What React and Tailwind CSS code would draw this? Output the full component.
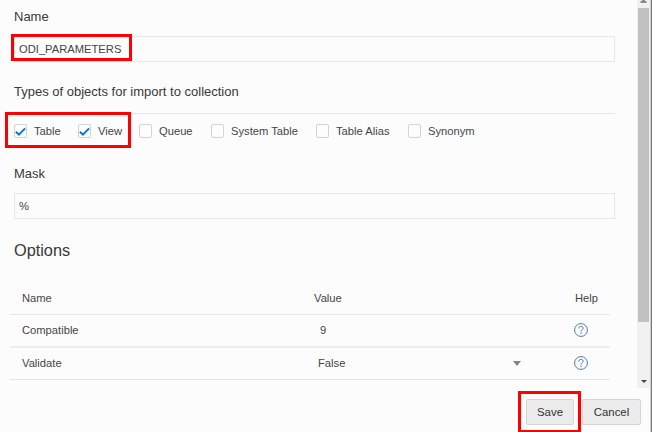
const types = [
  { label: 'Table', checked: true, cls: 'w-[64px]' },
  { label: 'View', checked: true, cls: 'w-[61px]' },
  { label: 'Queue', checked: false, cls: 'w-[72px]' },
  { label: 'System Table', checked: false, cls: 'w-[105px]' },
  { label: 'Table Alias', checked: false, cls: 'w-[92px]' },
  { label: 'Synonym', checked: false, cls: 'w-[80px]' },
];

function Checkbox({ label, checked, cls }) {
  return (
    <label className={`flex shrink-0 items-center gap-[7px] whitespace-nowrap ${cls}`}>
      <span className="flex h-[14px] w-[13px] shrink-0 items-center justify-center rounded-[2px] border border-[#d3d3d3] bg-[#fdfdfd]">
        {checked && (
          <svg className="shrink-0" width="11" height="11" viewBox="0 0 12 12" fill="none" stroke="#0b78c4" strokeWidth="2.2">
            <path d="M1 6.2 4.3 9.4 11 2.6" />
          </svg>
        )}
      </span>
      {label}
    </label>
  );
}

function HelpIcon() {
  return (
    <svg width="14" height="14" viewBox="0 0 14 14" fill="none" stroke="#4a7db0" strokeWidth="1">
      <circle cx="7" cy="7" r="6.4" />
      <path d="M4.8 5.5C4.8 4.1 5.7 3.4 7 3.4S9.2 4.2 9.2 5.3C9.2 6.7 7 6.8 7 8.7" />
      <path d="M7 9.8v1.2" strokeWidth="1.2" />
    </svg>
  );
}

export default function App() {
  return (
    <div className="relative flex h-[432px] w-[652px] flex-col overflow-hidden bg-[#fcfcfc] font-['Liberation_Sans',Arial,sans-serif] text-[11.2px] leading-[14px] text-[#454545]">
      <div className="flex h-[388px]">
        <main className="w-[637px] pt-[9px]">
          <div className="ml-[14px] w-[601px]">
            <h3 className="h-[27px] text-[13px] leading-[16px] text-[#383838]">Name</h3>
            <div className="flex h-[26px] items-center border border-[#e8e8e8] pl-1">ODI_PARAMETERS</div>
            <h3 className="h-[52px] border-b border-[#e6e6e6] pt-[22px] text-[13px] leading-[16px] text-[#383838]">Types of objects for import to collection</h3>
            <div className="flex h-[51px] pt-[10px]">
              {types.map((t) => (
                <div key={t.label}><Checkbox {...t} /></div>
              ))}
            </div>
            <h3 className="h-[28px] text-[13px] leading-[16px] text-[#383838] pt-px">Mask</h3>
            <div className="flex h-[26px] items-center border border-[#e8e8e8] pl-1">%</div>
            <h2 className="h-[63px] pt-[21px] text-[16.3px] leading-[20px] text-[#383838]">Options</h2>
          </div>
          <div className="ml-[10px] w-[600px]">
            <div className="flex h-[33px] items-center border-b border-[#e4e4e4] pl-3">
              <span className="w-[292px]">Name</span>
              <span className="w-[261px]">Value</span>
              <span>Help</span>
            </div>
            <div className="flex h-[33px] items-center border-b-2 border-[#ededed] pb-px pl-3">
              <span className="w-[298px]">Compatible</span>
              <span className="w-[254px]">9</span>
              <HelpIcon />
            </div>
            <div className="flex h-[32px] items-center border-b border-[#e4e4e4] pb-px pl-3">
              <span className="w-[296px]">Validate</span>
              <span className="w-[195px]">False</span>
              <span className="w-[61px]">
                <svg width="8" height="5" viewBox="0 0 8 5" fill="#858585"><path d="M0 0h8L4 5z" /></svg>
              </span>
              <HelpIcon />
            </div>
          </div>
        </main>
        <div className="flex w-[13px] flex-col items-center bg-[#f1f1f1]">
          <div className="h-[8px]">
            <svg className="block" width="7" height="4" viewBox="0 0 7 4" fill="#8b8b8b"><path d="M2 0h3v1h1.5v2h-6V1H2z" /></svg>
          </div>
          <div className="h-[314px] w-[11px] bg-[#c1c1c1]" />
          <svg className="mt-[58px]" width="6" height="3" viewBox="0 0 6 3" fill="#454545"><path d="M0 0h6L3 3z" /></svg>
        </div>
      </div>
      <footer className="flex gap-[8px] pt-[11px] pl-[526px] text-[11.4px] text-[#333]">
        <button className="h-[26px] w-[48px] rounded-[2px] border border-[#d5d5d5] bg-[#ebebeb]">Save</button>
        <button className="h-[26px] w-[59px] rounded-[2px] border border-[#d5d5d5] bg-[#ebebeb]">Cancel</button>
      </footer>
      <div className="absolute top-[34px] left-[11px] h-[27px] w-[121px] border-3 border-[#fe0000]" />
      <div className="absolute top-[112px] left-[5px] h-[36px] w-[126px] border-3 border-[#fe0000]" />
      <div className="absolute top-[391px] left-[518px] h-[42px] w-[63px] border-3 border-[#fe0000]" />
      <div className="absolute top-0 right-0 h-full w-[2px] border-r border-l border-r-[#777] border-l-[#d0d0d0]" />
    </div>
  );
}
